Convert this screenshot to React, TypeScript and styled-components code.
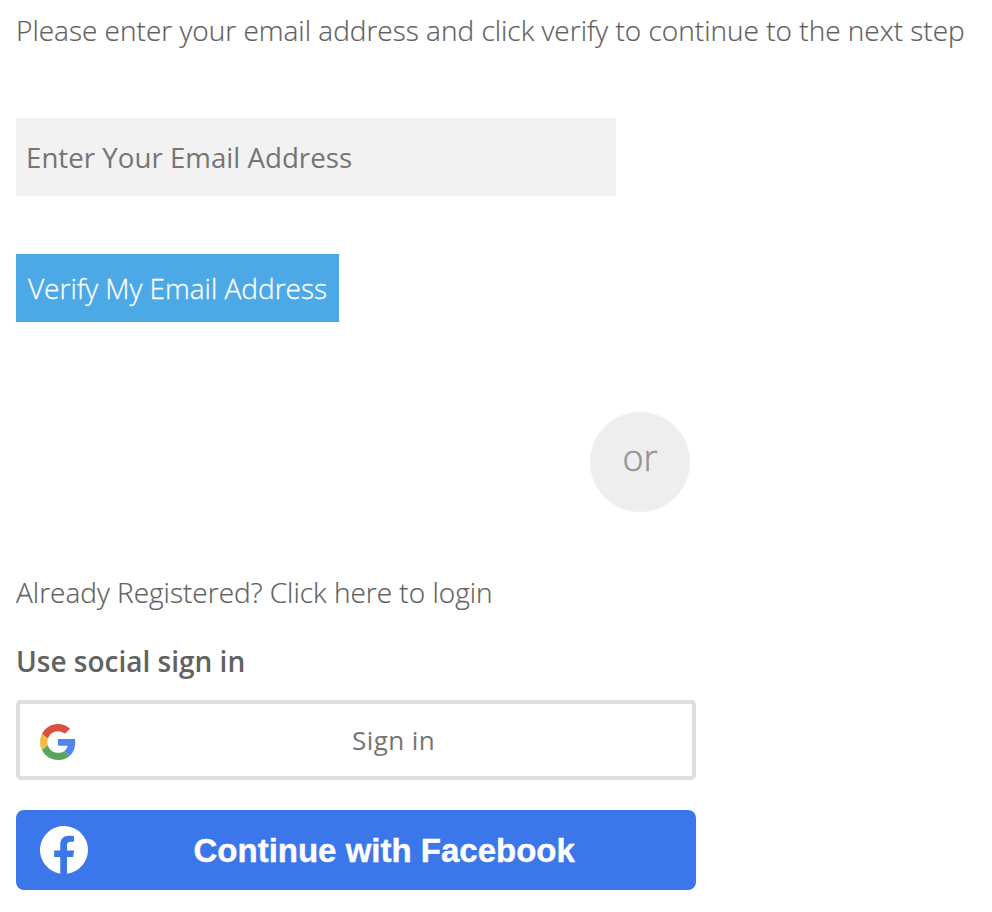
import React from "react";
import styled, { createGlobalStyle } from "styled-components";

const Global = createGlobalStyle`
  *{box-sizing:border-box}
  body{margin:0;background:#fff;font-family:"Open Sans",sans-serif;color:#58585a;}
`;
const Page = styled.main`
  width: 992px; height: 912px; padding: 10px 16px 0; overflow: hidden;
  display: flex; flex-direction: column; align-items: flex-start;
`;
const Text = styled.p<{ $top?: number }>`
  margin: ${p => p.$top ?? 0}px 0 0; font-size: 28px; line-height: 40px; font-weight: 300; white-space: nowrap;
  color: #606060; -webkit-text-stroke: 0.2px #606060;
`;
const Email = styled.input`
  margin-top: 68px; width: 600px; height: 78px; border: 0; padding: 0 10px 0 10px;
  background: #f2f2f2; font: 400 27.7px "Open Sans", sans-serif; color: #666;
  &::placeholder { color: #757575; opacity: 1; }
`;
const Verify = styled.button`
  margin-top: 58px; width: 323px; height: 68px; border: 0; padding: 0; background: #4ca9e6; color: #fff;
  font: 300 28px "Open Sans", sans-serif; white-space: nowrap; -webkit-text-stroke: 0.3px #fff;
`;
const Or = styled.div`
  margin: 90px 0 0 574px; width: 100px; height: 100px; border-radius: 50%; background: #eee;
  color: #959595; font-size: 36px; font-weight: 300; line-height: 91px; text-align: center;
  -webkit-text-stroke: 0.5px #959595;
`;
const Heading = styled.h2`
  margin: 29px 0 0; font-size: 28px; line-height: 40px; font-weight: 600; white-space: nowrap; color: #626262;
`;
const Social = styled.button`
  width: 680px; height: 80px; padding: 0 20px; display: flex; align-items: center;
`;
const Google = styled(Social)`
  margin-top: 19px; border: 4px solid #dedede; border-radius: 5px; background: #fff; color: #757575;
  font: 400 26px "Open Sans", sans-serif; letter-spacing: 0.436px;
`;
const GoogleMark = styled.svg`margin-top: 4px;`;
const Facebook = styled(Social)`
  margin-top: 30px; padding: 0 24px; border: 0; border-radius: 8px; background: #3b76ea; color: #fff;
  font: 700 33px "Liberation Sans", sans-serif; -webkit-text-stroke: 0.4px #fff;
`;
const Label = styled.span<{ $gap: number; $drop?: number }>`
  margin-left: ${p => p.$gap}px; padding-top: ${p => p.$drop ?? 0}px; white-space: nowrap;
`;

export default function App() {
  return <><Global /><Page>
    <Text>Please enter your email address and click verify to continue to the next step</Text>
    <Email placeholder="Enter Your Email Address" />
    <Verify>Verify My Email Address</Verify>
    <Or>or</Or>
    <Text $top={60}>Already Registered? Click here to login</Text>
    <Heading>Use social sign in</Heading>
    <Google>
      <GoogleMark width="36" height="36" viewBox="0 0 48 48">
        <path fill="#D9503F" d="M24 9.5c3.54 0 6.71 1.22 9.21 3.6l6.85-6.85C35.9 2.38 30.47 0 24 0 14.62 0 6.51 5.38 2.56 13.22l7.98 6.19C12.43 13.72 17.74 9.5 24 9.5z"/>
        <path fill="#5383EC" d="M46.98 24.55c0-1.57-.15-3.09-.38-4.55H24v9.02h12.94c-.58 2.96-2.26 5.48-4.78 7.18l7.73 6c4.51-4.18 7.09-10.36 7.09-17.65z"/>
        <path fill="#F2BD42" d="M10.53 28.59c-.48-1.45-.76-2.99-.76-4.59s.27-3.14.76-4.59l-7.98-6.19C.92 16.46 0 20.12 0 24c0 3.88.92 7.54 2.56 10.78l7.97-6.19z"/>
        <path fill="#58A55C" d="M24 48c6.48 0 11.93-2.13 15.89-5.81l-7.73-6c-2.15 1.45-4.92 2.3-8.16 2.3-6.26 0-11.57-4.22-13.47-9.91l-7.98 6.19C6.51 42.62 14.62 48 24 48z"/>
      </GoogleMark>
      <Label $gap={276}>Sign in</Label>
    </Google>
    <Facebook>
      <svg width="48" height="48" viewBox="0 0 48 48">
        <path fill="#fff" d="M48 24a24 24 0 1 0-27.75 23.7V31h-6.1v-6.6h6.1v-5.7c0-6 3.6-8.9 8.8-8.9 2.6 0 4.9.3 4.9.3v5.7h-3c-3 0-3.9 1.6-3.9 3.4v5.2h7l-.8 6.6h-6.2v16.7A24 24 0 0 0 48 24z"/>
      </svg>
      <Label $gap={105.5} $drop={2}>Continue with Facebook</Label>
    </Facebook>
  </Page></>;
}
